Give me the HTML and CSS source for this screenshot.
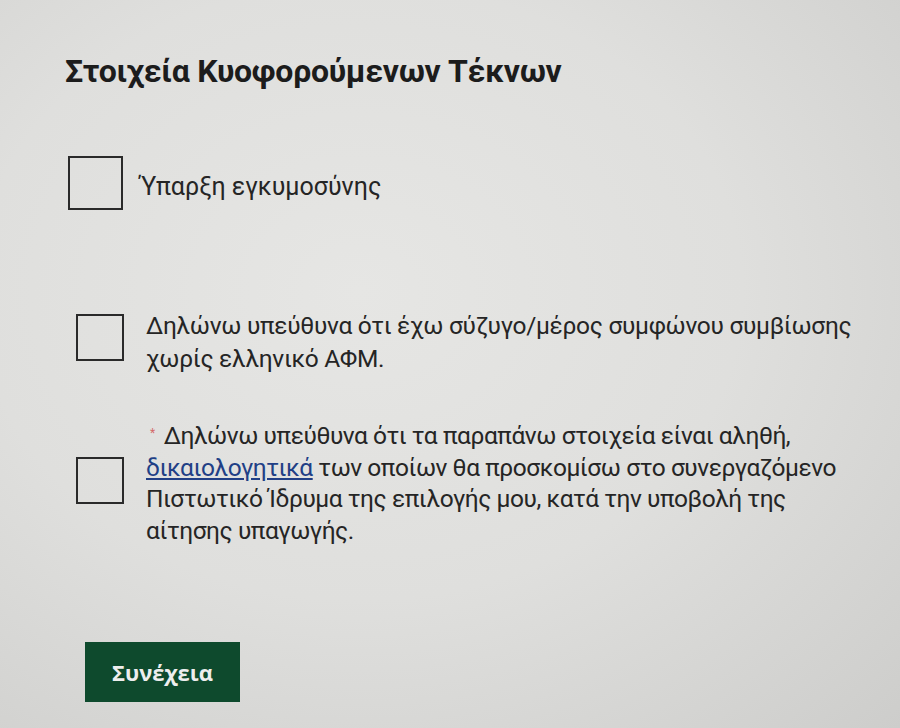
FILE: index.html
```html
<!DOCTYPE html>
<html lang="el">
<head>
    <meta charset="UTF-8">
    <meta name="viewport" content="width=device-width, initial-scale=1.0">
    <title>Στοιχεία Κυοφορούμενων Τέκνων</title>
    <link rel="stylesheet" href="styles.css">
</head>
<body>

    <div class="page">
        <h1 class="title">Στοιχεία Κυοφορούμενων Τέκνων</h1>

        <label class="check-row row-first">
            <span class="box"></span>
            <span class="check-text">Ύπαρξη εγκυμοσύνης</span>
        </label>

        <label class="check-row row-second">
            <span class="box small"></span>
            <span class="check-text big">Δηλώνω υπεύθυνα ότι έχω σύζυγο/μέρος συμφώνου συμβίωσης<br>χωρίς ελληνικό ΑΦΜ.</span>
        </label>

        <label class="check-row row-third">
            <span class="box small"></span>
            <span class="check-text big tight"><span class="req">*</span>Δηλώνω υπεύθυνα ότι τα παραπάνω στοιχεία είναι αληθή,<br><a href="#" class="link">δικαιολογητικά</a> των οποίων θα προσκομίσω στο συνεργαζόμενο<br>Πιστωτικό Ίδρυμα της επιλογής μου, κατά την υποβολή της<br>αίτησης υπαγωγής.</span>
        </label>

        <button class="btn">Συνέχεια</button>
    </div>

</body>
</html>
```

FILE: styles.css
```css
html, body {
    margin: 0;
    height: 100%;
}
body {
    font-family: Roboto, "Noto Sans", sans-serif;
    color: #252525;
    background: radial-gradient(ellipse at 40% 40%, #e6e6e4 0%, #dfdfdd 50%, #cdcdcb 100%);
    overflow: hidden;
}
.page {
    padding: 52px 0 0 65px;
}
.title {
    font-family: Roboto, sans-serif;
    font-size: 32px;
    line-height: 39px;
    font-weight: 700;
    letter-spacing: -0.3px;
    color: #1c1c1c;
    margin: 0;
}

/* checkbox rows */
.check-row {
    display: flex;
    align-items: flex-start;
}
.row-first {
    margin-top: 65px;
    margin-left: 3px;
}
.row-second {
    margin-top: 99px;
    margin-left: 11px;
}
.row-third {
    margin-top: 45px;
    margin-left: 11px;
}
.box {
    width: 51px;
    height: 50px;
    border: 2px solid #2a2a2a;
    flex-shrink: 0;
    margin-right: 17px;
}
.box.small {
    width: 44px;
    height: 43px;
    margin-right: 22px;
}
.row-second .box {
    margin-top: 5px;
}
.row-third .box {
    margin-top: 37px;
}
.check-text {
    font-size: 25px;
    line-height: 30px;
    margin-top: 16px;
}
.check-text.big {
    font-size: 24.5px;
    line-height: 33px;
    letter-spacing: -0.3px;
    margin-top: 0;
}
.check-text.tight {
    line-height: 31.7px;
    letter-spacing: -0.45px;
}
.req {
    color: #d46a6a;
    font-size: 12px;
    vertical-align: top;
    line-height: 26px;
    margin: 0 9px 0 4px;
}
.link {
    color: #213f86;
    text-decoration: underline;
}
.btn {
    display: block;
    margin: 95px 0 0 20px;
    width: 155px;
    height: 60px;
    background-color: #0e4a2d;
    color: #eeeeee;
    border: none;
    font-family: "Open Sans", sans-serif;
    font-size: 22px;
    font-weight: 700;
    cursor: pointer;
}
```
